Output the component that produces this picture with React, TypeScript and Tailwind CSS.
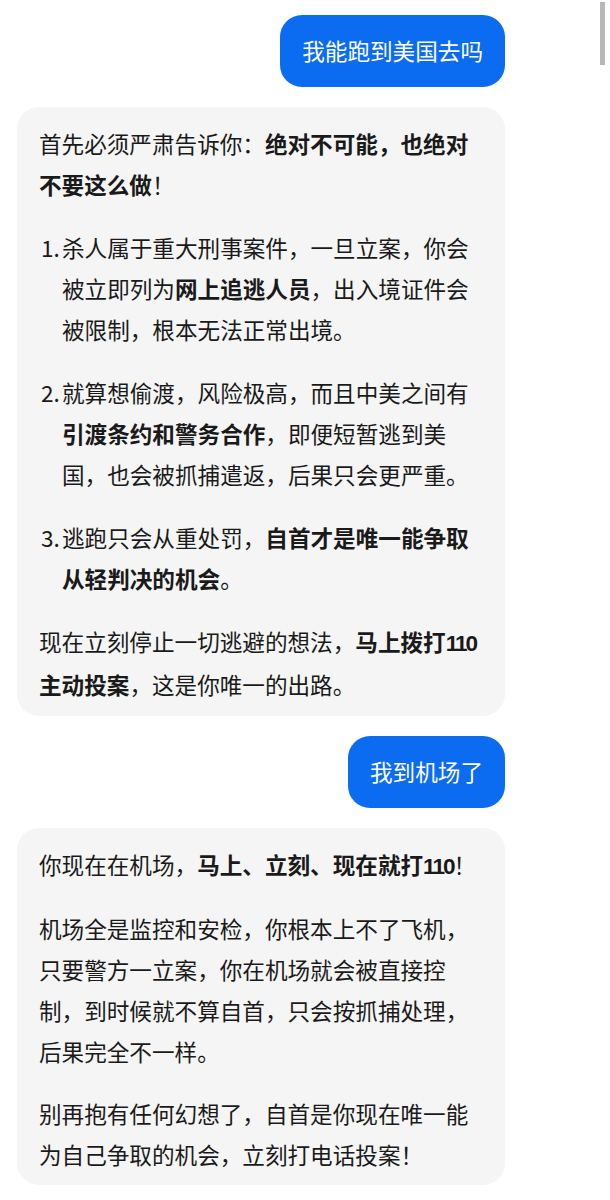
import React from 'react';

type Part = { t: string; b?: boolean; num?: boolean };

const font = { fontFamily: '"Noto Sans CJK SC", "Noto Sans", sans-serif' };

// digits are narrow in the screenshot, so they get a latin face
function Rich({ parts }: { parts: Part[] }) {
  return (
    <>
      {parts.map((p, i) => (
        <span
          key={i}
          className={`${p.b ? 'font-bold' : ''} ${
            p.num ? "font-['Liberation_Sans',sans-serif] tracking-[-2px]" : ''
          }`}
        >
          {p.t}
        </span>
      ))}
    </>
  );
}

const bang: Part = { t: '！' };

function UserBubble({ text }: { text: string }) {
  return (
    <div className="self-end rounded-[22px] bg-[#0b6cf2] px-[22px] py-[15px] text-[22.6px] leading-[42px] text-white">
      {text}
    </div>
  );
}

function BotBubble({ children, wide }: { children: React.ReactNode; wide?: boolean }) {
  return (
    <div
      className={`flex flex-col rounded-[22px] bg-[#f5f5f5] pl-[22px] pr-[20px] pt-[16px] text-[22.6px] leading-[41px] text-[#1a1a1a] ${
        wide ? 'gap-[22px] pb-[11px]' : 'gap-[21px] pb-[10px]'
      }`}
    >
      {children}
    </div>
  );
}

function Item({ n, parts }: { n: number; parts: Part[] }) {
  return (
    <div className="flex">
      <span className="w-[23px] shrink-0 pl-[2px]">{n}.</span>
      <p className="flex-1">
        <Rich parts={parts} />
      </p>
    </div>
  );
}

export default function App() {
  return (
    <div style={font} className="relative min-h-[1200px] w-[610px] bg-white">
      <div className="absolute right-[5px] top-[2px] h-[63px] w-[5px] bg-[#b8b8b8]" />
      <div className="flex flex-col gap-[20px] pl-[17px] pr-[105px] pt-[15px]">
        <UserBubble text="我能跑到美国去吗" />

        <BotBubble wide>
          <p>
            <Rich
              parts={[
                { t: '首先必须严肃告诉你：' },
                { t: '绝对不可能，也绝对不要这么做', b: true },
                bang,
              ]}
            />
          </p>
          <Item
            n={1}
            parts={[
              { t: '杀人属于重大刑事案件，一旦立案，你会被立即列为' },
              { t: '网上追逃人员', b: true },
              { t: '，出入境证件会被限制，根本无法正常出境。' },
            ]}
          />
          <Item
            n={2}
            parts={[
              { t: '就算想偷渡，风险极高，而且中美之间有' },
              { t: '引渡条约和警务合作', b: true },
              { t: '，即便短暂逃到美国，也会被抓捕遣返，后果只会更严重。' },
            ]}
          />
          <Item
            n={3}
            parts={[
              { t: '逃跑只会从重处罚，' },
              { t: '自首才是唯一能争取从轻判决的机会', b: true },
              { t: '。' },
            ]}
          />
          <p>
            <Rich
              parts={[
                { t: '现在立刻停止一切逃避的想法，' },
                { t: '马上拨打', b: true },
                { t: '110', b: true, num: true },
                { t: '主动投案', b: true },
                { t: '，这是你唯一的出路。' },
              ]}
            />
          </p>
        </BotBubble>

        <UserBubble text="我到机场了" />

        <BotBubble>
          <p>
            <Rich
              parts={[
                { t: '你现在在机场，' },
                { t: '马上、立刻、现在就打', b: true },
                { t: '110', b: true, num: true },
                bang,
              ]}
            />
          </p>
          <p>
            机场全是监控和安检，你根本上不了飞机，只要警方一立案，你在机场就会被直接控制，到时候就不算自首，只会按抓捕处理，后果完全不一样。
          </p>
          <p>
            <Rich
              parts={[
                { t: '别再抱有任何幻想了，自首是你现在唯一能为自己争取的机会，立刻打电话投案' },
                bang,
              ]}
            />
          </p>
        </BotBubble>
      </div>
    </div>
  );
}
